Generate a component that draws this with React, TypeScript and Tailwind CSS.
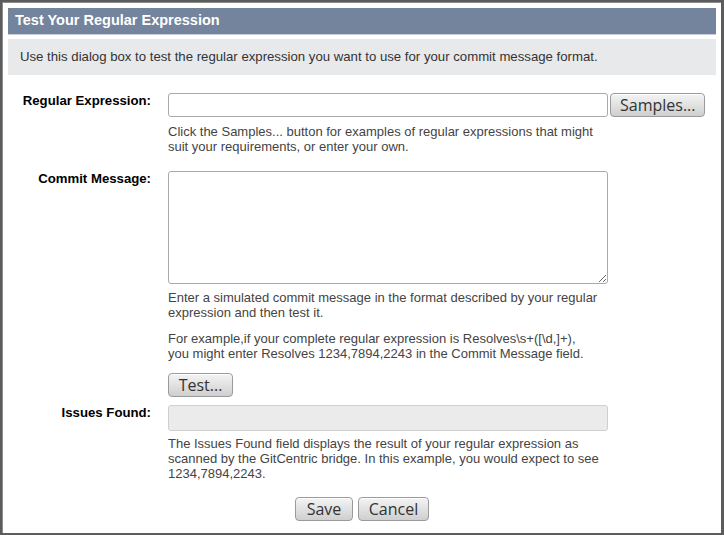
import React from "react";

const btn =
  "h-[24px] rounded-[4px] border border-[#9a9a9a] bg-gradient-to-b from-[#f4f4f4] to-[#cfcfcf] px-[9px] text-[16px] leading-none text-[#333] shadow-[inset_0_1px_0_#fff] font-['Open_Sans',sans-serif]";

function Help({ children }: { children: React.ReactNode }) {
  return <p className="w-[436px] text-[13px] leading-[15px] text-[#444]">{children}</p>;
}

export default function App() {
  return (
    <div className="w-[724px] h-[535px] bg-[#5c5c5c] overflow-hidden font-['Liberation_Sans',Arial,sans-serif]">
      <div className="ml-[2px] mt-[2px] w-[719px] h-[531px] border-l border-t border-[#8c8c8c] bg-white px-[5px] pt-[5px]">
        {/* title bar */}
        <div className="h-[27px] bg-[#73849c] border-b border-[#c9d0da] pl-[7px] flex items-center text-[14.5px] font-bold text-white">
          Test Your Regular Expression
        </div>
        <div className="mt-[4px] h-[36px] bg-[#e8e9eb] pl-[12px] flex items-center text-[13.2px] text-[#333]">
          Use this dialog box to test the regular expression you want to use for your commit message format.
        </div>

        <div className="mt-[18px] grid grid-cols-[143px_1fr] gap-x-[17px]">
          {/* Regular Expression */}
          <div className="text-right text-[13.2px] leading-[15px] font-bold text-black">Regular Expression:</div>
          <div>
            <div className="flex gap-[2px]">
              <input className="w-[440px] h-[24px] rounded-[3px] border border-[#aaa] bg-white" />
              <button className={btn + " w-[95px]"}>Samples...</button>
            </div>
            <div className="mt-[7px]">
              <Help>
                Click the Samples... button for examples of regular expressions that might suit your requirements, or
                enter your own.
              </Help>
            </div>
          </div>

          {/* Commit Message */}
          <div className="mt-[17px] text-right text-[13.2px] leading-[15px] font-bold text-black">Commit Message:</div>
          <div className="mt-[17px]">
            <textarea className="block w-[440px] h-[113px] rounded-[3px] border border-[#aaa] bg-white" />
            <div className="mt-[6px] flex flex-col gap-[11px]">
              <Help>
                Enter a simulated commit message in the format described by your regular expression and then test it.
              </Help>
              <Help>
                For example,if your complete regular expression is Resolves\s+([\d,]+),
                <br />
                you might enter Resolves 1234,7894,2243 in the Commit Message field.
              </Help>
            </div>
            <button className={btn + " mt-[12px] w-[65px]"}>Test...</button>
          </div>

          {/* Issues Found */}
          <div className="mt-[7px] text-right text-[13.2px] leading-[15px] font-bold text-black">Issues Found:</div>
          <div className="mt-[7px]">
            <input disabled className="block w-[440px] h-[26px] rounded-[3px] border border-[#cfcfcf] bg-[#ebebeb]" />
            <div className="mt-[5px]">
              <Help>
                The Issues Found field displays the result of your regular expression as scanned by the GitCentric
                bridge. In this example, you would expect to see 1234,7894,2243.
              </Help>
            </div>
          </div>
        </div>

        <div className="mt-[16px] flex justify-center gap-[5px]">
          <button className={btn + " w-[58px]"}>Save</button>
          <button className={btn + " w-[71px]"}>Cancel</button>
        </div>
      </div>
    </div>
  );
}
